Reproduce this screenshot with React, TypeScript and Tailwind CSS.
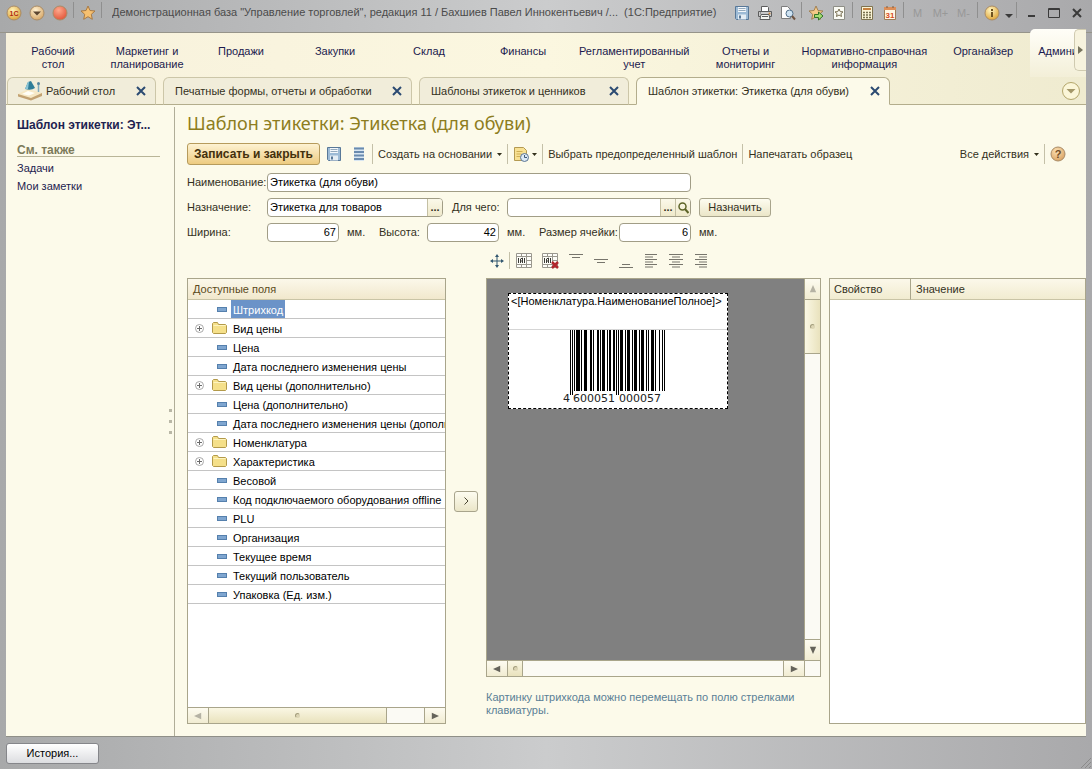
import type { ReactNode } from 'react'

const sections = [
  'Рабочий\nстол',
  'Маркетинг и\nпланирование',
  'Продажи',
  'Закупки',
  'Склад',
  'Финансы',
  'Регламентированный\nучет',
  'Отчеты и\nмониторинг',
  'Нормативно-справочная\nинформация',
  'Органайзер',
]

type Tab = { title: string; width: string; icon?: boolean; active?: boolean }

const tabs: Tab[] = [
  { title: 'Рабочий стол', width: 'w-[149px]', icon: true },
  { title: 'Печатные формы, отчеты и обработки', width: 'w-[249px]' },
  { title: 'Шаблоны этикеток и ценников', width: 'w-[210px]' },
  { title: 'Шаблон этикетки: Этикетка (для обуви)', width: 'w-[254px]', active: true },
]

const fields: { name: string; group?: boolean }[] = [
  { name: 'Штрихкод' },
  { name: 'Вид цены', group: true },
  { name: 'Цена' },
  { name: 'Дата последнего изменения цены' },
  { name: 'Вид цены (дополнительно)', group: true },
  { name: 'Цена (дополнительно)' },
  { name: 'Дата последнего изменения цены (дополнительно)' },
  { name: 'Номенклатура', group: true },
  { name: 'Характеристика', group: true },
  { name: 'Весовой' },
  { name: 'Код подключаемого оборудования offline' },
  { name: 'PLU' },
  { name: 'Организация' },
  { name: 'Текущее время' },
  { name: 'Текущий пользователь' },
  { name: 'Упаковка (Ед. изм.)' },
]

export default function App() {
  return (
    <div className="flex h-screen flex-col overflow-hidden bg-gradient-to-r from-[#a8a9aa] via-[#cbcccd] to-[#a9a9ab] font-['Liberation_Sans',Arial,sans-serif] text-[11px] leading-[13px] text-[#33301c]">
      <TitleBar />
      <div className="mx-[6px] flex min-h-0 flex-1 flex-col border-b border-[#8f8f88] bg-[#fcfaea]">
        <SectionBar />
        <TabBar />
        <div className="flex min-h-0 flex-1 pt-[2px]">
          <Sidebar />
          <TemplateForm />
        </div>
      </div>
      <footer className="flex h-8 shrink-0 items-center justify-between pl-[6px]">
        <button className="h-[21px] w-[93px] rounded-[3px] border border-[#85868a] bg-gradient-to-b from-white to-[#dcdde0] text-black">
          История...
        </button>
        <svg width="12" height="12" viewBox="0 0 12 12" className="self-end" stroke="#8a8a8a">
          <path d="M1 11L11 1M5 11l6-6M9 11l2-2" />
        </svg>
      </footer>
    </div>
  )
}

function TitleBar() {
  return (
    <header className="flex h-[33px] shrink-0 items-start border-b border-[#96948a] pt-[2px] pr-[4px] pl-[2px]">
      <IconButton label="Главное меню">
        <Ball light="#fff3b8" dark="#dda33d">
          <text x="8" y="11" textAnchor="middle" fontSize="7" fontWeight="bold" fill="#b02a10">1С</text>
        </Ball>
      </IconButton>
      <IconButton label="Меню">
        <Ball light="#fff0d0" dark="#d8a96a">
          <path d="M4 6.500h8L8 10.500z" fill="#5c4630" />
        </Ball>
      </IconButton>
      <IconButton label="Стоп">
        <Ball light="#ffa88c" dark="#e2583c" />
      </IconButton>
      <Divider />
      <IconButton label="Избранное">
        <svg width="16" height="16" viewBox="0 0 16 16">
          <path d={STAR} fill="#f6c070" stroke="#a87a45" />
        </svg>
      </IconButton>
      <Divider />
      <h1 className="ml-2 min-w-0 flex-1 truncate pt-1 text-[11px] whitespace-pre text-[#4b4b4b]">
        {'Демонстрационная база "Управление торговлей", редакция 11 / Бахшиев Павел Иннокентьевич /...  (1С:Предприятие)'}
      </h1>
      <IconButton label="Сохранить"><SaveIcon /></IconButton>
      <IconButton label="Печать">
        <svg width="16" height="16" viewBox="0 0 16 16" stroke="#5d5d5d">
          <path d="M4.500 6V1.500h6l1 1V6" fill="#fff" />
          <path d="M1.500 6.500h13v5h-13z" fill="#c9c9c9" />
          <path d="M4 9.500h8l1 5H3z" fill="#f5f5f0" />
          <path d="M5 11.500h6M3 8h1" />
          <circle cx="12.500" cy="8.500" r="1" fill="#d4873a" stroke="none" />
        </svg>
      </IconButton>
      <IconButton label="Просмотр">
        <svg width="16" height="16" viewBox="0 0 16 16" fill="none">
          <path d="M1.500 1.500h6l3 3v9h-9z" fill="#fdfdfd" stroke="#7d7d7d" />
          <circle cx="9.500" cy="8.500" r="3.500" fill="#cfe3f2" stroke="#52708b" />
          <path d="M12 11l3 3.500" stroke="#6e5340" strokeWidth="2" />
        </svg>
      </IconButton>
      <Divider />
      <IconButton label="Добавить в избранное">
        <svg width="16" height="16" viewBox="0 0 16 16">
          <path d={STAR} fill="#f5c987" stroke="#a18154" />
          <path d="M6.500 9.500h4V7l4.500 4-4.500 4v-2.500h-4z" fill="#a5dd72" stroke="#347427" />
        </svg>
      </IconButton>
      <IconButton label="История избранного">
        <svg width="16" height="16" viewBox="0 0 16 16">
          <path d="M2.500 1.500h11v13h-11z" fill="#fbfbf4" stroke="#8e8e86" />
          <path d="M8 4l1.200 2.600 2.800.3-2.100 1.800.6 2.800L8 10l-2.500 1.500.6-2.800L4 6.900l2.800-.3z" fill="none" stroke="#776d50" />
        </svg>
      </IconButton>
      <Divider />
      <IconButton label="Калькулятор">
        <svg width="16" height="16" viewBox="0 0 16 16">
          <path d="M2.500 1.500h11v13h-11z" fill="#fbf5d6" stroke="#7e7350" />
          <path d="M4 3h8v2H4z" fill="#c8823e" />
          <path d="M4 7.500h8M4 10h8M4 12.500h8" stroke="#77704f" strokeDasharray="2 1" strokeWidth="1.500" />
        </svg>
      </IconButton>
      <IconButton label="Календарь">
        <svg width="16" height="16" viewBox="0 0 16 16">
          <path d="M2.500 2.500h11v12h-11z" fill="#fff8e4" stroke="#9c7c58" />
          <path d="M2 2h12v3H2z" fill="#dd8f58" />
          <path d="M5 1v2M11 1v2" stroke="#775b40" />
          <text x="8" y="13" textAnchor="middle" fontSize="8" fontWeight="bold" fill="#d84b22">31</text>
        </svg>
      </IconButton>
      <Divider />
      {['M', 'M+', 'M-'].map((name) => (
        <button key={name} disabled className="h-[22px] w-[23px] shrink-0 text-[#989898]">
          {name}
        </button>
      ))}
      <Divider />
      <IconButton label="О программе">
        <Ball light="#fff4c0" dark="#e0a83c">
          <path d="M7 4h2v2H7zM7 7h2v5H7z" fill="#6f5320" />
        </Ball>
      </IconButton>
      <button aria-label="Ещё" className="flex h-[18px] w-[11px] shrink-0 items-end justify-center pb-[2px]">
        <svg width="8" height="4" viewBox="0 0 8 4" fill="#3a3a3a"><path d="M0 0h8L4 4z" /></svg>
      </button>
      <Divider />
      <div className="flex shrink-0 text-[#3a3a3a]">
        <IconButton label="Свернуть">
          <svg width="12" height="12" viewBox="0 0 12 12" stroke="currentColor" strokeWidth="2"><path d="M3 9h7" /></svg>
        </IconButton>
        <IconButton label="Развернуть">
          <svg width="12" height="12" viewBox="0 0 12 12" fill="none" stroke="currentColor"><path d="M.5 1.500h11v9H.5zM.5 2.500h11" /></svg>
        </IconButton>
        <IconButton label="Закрыть">
          <svg width="10" height="10" viewBox="0 0 10 10" stroke="currentColor" strokeWidth="2"><path d="M1 1l8 8M9 1L1 9" /></svg>
        </IconButton>
      </div>
    </header>
  )
}

function SectionBar() {
  return (
    <nav className="flex h-11 shrink-0 bg-gradient-to-r from-[#f7f1dc] via-[#fbf7e0] to-[#efebd0] text-center text-[#1b1a4e]">
      {sections.map((name) => (
        <a key={name} href="#" className="min-w-[94px] shrink-0 px-[9px] pt-3 whitespace-pre">
          {name}
        </a>
      ))}
      <div className="-mt-1 flex min-w-0 flex-1 rounded-tl-[5px] bg-gradient-to-b from-[#fffef8] to-[#f3efd8]">
        <a href="#" className="min-w-0 flex-1 overflow-hidden pt-4 pl-2 text-left whitespace-nowrap">
          Администрирование
        </a>
        <button
          aria-label="Прокрутить разделы"
          className="flex h-[42px] w-3 shrink-0 items-center justify-center rounded-l-[5px] border border-r-0 border-[#cfcab0] bg-[#f7f3de]"
        >
          <svg width="5" height="8" viewBox="0 0 5 8" fill="#77745e"><path d="M0 0l5 4-5 4z" /></svg>
        </button>
      </div>
    </nav>
  )
}

function TabBar() {
  return (
    <div className="flex h-7 shrink-0 items-end bg-gradient-to-r from-[#f7f1dc] via-[#fbf7e0] to-[#efebd0]">
      <div className="h-full w-px border-b border-[#b3ad8c]" />
      {tabs.map((tab) => (
        <div key={tab.title} className="flex h-full">
          <div
            className={`flex h-full items-center justify-between rounded-t-[6px] border pr-[7px] ${tab.width} ${
              tab.active
                ? 'border-[#b3ad8c] border-b-transparent bg-[#fcfaea]'
                : 'border-[#ccc6a8] border-b-[#b3ad8c] bg-[#f1edda]'
            }`}
          >
            <a href="#" className={`flex items-center gap-1 whitespace-nowrap ${tab.icon ? 'pl-[10px]' : 'pl-[11px]'}`}>
              {tab.icon && <DesktopIcon />}
              {tab.title}
            </a>
            <button aria-label={`Закрыть: ${tab.title}`} className="p-[2px]">
              <svg width="10" height="10" viewBox="0 0 10 10" stroke="#2b4a72" strokeWidth="2">
                <path d="M1 1l8 8M9 1L1 9" />
              </svg>
            </button>
          </div>
          <div className="w-[7px] border-b border-[#b3ad8c]" />
        </div>
      ))}
      <div className="flex h-full flex-1 items-center justify-end border-b border-[#b3ad8c] pr-[6px]">
        <button aria-label="Список вкладок">
          <svg width="18" height="18" viewBox="0 0 18 18" className="block">
            <circle cx="9" cy="9" r="8.500" fill="#fbf6d8" stroke="#b3a66b" />
            <path d="M4.500 7h9L9 11.500z" fill="#a39768" />
          </svg>
        </button>
      </div>
    </div>
  )
}

function Sidebar() {
  return (
    <aside className="flex w-[169px] shrink-0 border-r border-[#b0ad98]">
      <div className="min-w-0 flex-1 pt-[11px] pl-[11px]">
        <p className="w-[140px] truncate text-[12px] leading-[14px] font-bold text-[#1e2350]">
          Шаблон этикетки: Эт...
        </p>
        <h2 className="mt-3 w-[143px] border-b border-[#b9b598] text-[12px] leading-[12px] font-bold text-[#7c7a5a]">
          См. также
        </h2>
        <ul className="mt-[5px] space-y-[5px] text-[#1e2350]">
          <li><a href="#">Задачи</a></li>
          <li><a href="#">Мои заметки</a></li>
        </ul>
      </div>
      <div className="flex w-2 flex-col items-center justify-center gap-2">
        <i className="size-[3px] bg-[#b9b7a6]" />
        <i className="size-[3px] bg-[#b9b7a6]" />
        <i className="size-[3px] bg-[#b9b7a6]" />
      </div>
    </aside>
  )
}

function TemplateForm() {
  return (
    <main className="flex min-w-0 flex-1 flex-col pb-3 pl-3">
      <h2 className="mt-1 font-['Noto_Sans',sans-serif] text-[18px] leading-[25px] text-[#8d7d20]">
        Шаблон этикетки: Этикетка (для обуви)
      </h2>
      <div className="mt-[7px] flex h-[22px] items-center whitespace-nowrap">
        <button className="h-[22px] w-[133px] rounded-[3px] border border-[#b69b5c] bg-gradient-to-b from-[#fdf2d2] to-[#edcb80] text-[12px] font-bold text-[#43300c]">
          Записать и закрыть
        </button>
        <button aria-label="Записать" className="ml-[6px]"><SaveIcon /></button>
        <button aria-label="Список" className="ml-[9px]">
          <svg width="16" height="16" viewBox="0 0 16 16" className="block">
            <path d="M3 1h10v14H3z" fill="#d8e6f2" />
            <path d="M3 2.500h10M3 6h10M3 9.500h10M3 13h10" stroke="#6a8bae" strokeWidth="2" />
          </svg>
        </button>
        <ToolDivider />
        <button className="flex items-center gap-[5px]">Создать на основании <Caret /></button>
        <ToolDivider />
        <button aria-label="Создать документ" className="flex items-center gap-[3px]">
          <svg width="16" height="16" viewBox="0 0 16 16">
            <path d="M1.500 1.500h9l3 3v10h-12z" fill="#f8e193" stroke="#b49a52" />
            <path d="M3.500 5.500h6M3.500 8h5M3.500 10.500h4" stroke="#d0af54" />
            <circle cx="11.500" cy="11.500" r="4" fill="#dbe9f6" stroke="#5b7594" />
            <path d="M11.500 9v2.500H14" fill="none" stroke="#3d5878" />
          </svg>
          <Caret />
        </button>
        <ToolDivider />
        <button>Выбрать предопределенный шаблон</button>
        <ToolDivider />
        <button>Напечатать образец</button>
        <div className="flex-1" />
        <button className="flex items-center gap-[5px]">Все действия <Caret /></button>
        <ToolDivider />
        <button aria-label="Справка" className="mr-5">
          <Ball light="#fbe0b4" dark="#dba566">
            <text x="8" y="12" textAnchor="middle" fontSize="11" fontWeight="bold" fill="#6f4a24">?</text>
          </Ball>
        </button>
      </div>

      <div className="mt-2 flex flex-col gap-[6px]">
        <div className="flex h-[19px] items-center">
          <label htmlFor="name" className="w-20 shrink-0">Наименование:</label>
          <TextBox id="name" value="Этикетка (для обуви)" width="w-[424px]" />
        </div>
        <div className="flex h-[19px] items-center">
          <label htmlFor="purpose" className="w-20 shrink-0">Назначение:</label>
          <TextBox id="purpose" value="Этикетка для товаров" width="w-[176px]">
            <FieldButton label="Выбрать назначение">...</FieldButton>
          </TextBox>
          <label htmlFor="target" className="ml-[9px] w-[55px] shrink-0">Для чего:</label>
          <TextBox id="target" value="" width="w-[184px]">
            <FieldButton label="Выбрать">...</FieldButton>
            <FieldButton label="Найти">
              <svg width="11" height="12" viewBox="0 0 11 12" fill="none" stroke="#5d6428">
                <circle cx="4.500" cy="4.500" r="3.500" strokeWidth="1.500" />
                <path d="M7 7l3.500 4" strokeWidth="2" />
              </svg>
            </FieldButton>
          </TextBox>
          <button className="ml-2 h-[19px] w-[72px] rounded-[3px] border border-[#a8a48c] bg-gradient-to-b from-[#fdfcf0] to-[#ebe6c8]">
            Назначить
          </button>
        </div>
        <div className="flex h-[19px] items-center">
          <label htmlFor="width" className="w-20 shrink-0">Ширина:</label>
          <TextBox id="width" value="67" width="w-[72px]" numeric />
          <span className="w-[40px] pl-2">мм.</span>
          <label htmlFor="height" className="w-12 shrink-0">Высота:</label>
          <TextBox id="height" value="42" width="w-[72px]" numeric />
          <span className="w-[40px] pl-2">мм.</span>
          <label htmlFor="cell" className="w-20 shrink-0">Размер ячейки:</label>
          <TextBox id="cell" value="6" width="w-[72px]" numeric />
          <span className="pl-2">мм.</span>
        </div>
      </div>

      <AlignBar />

      <div className="mt-[9px] flex min-h-0 flex-1">
        <FieldTree />
        <div className="flex w-10 shrink-0 items-center justify-center">
          <button
            aria-label="Добавить поле"
            className="flex h-[21px] w-6 items-center justify-center rounded-[3px] border border-[#a8a48c] bg-gradient-to-b from-[#fdfcf0] to-[#ebe6c8]"
          >
            <svg width="5" height="8" viewBox="0 0 5 8" fill="none" stroke="#4a4630"><path d="M.5.5L4 4 .5 7.500" /></svg>
          </button>
        </div>
        <div className="flex w-[335px] shrink-0 flex-col">
          <LabelCanvas />
          <p className="mt-[14px] h-[33px] text-[#5a7f96]">
            Картинку штрихкода можно перемещать по полю стрелками клавиатуры.
          </p>
        </div>
        <div className="ml-2 min-w-0 flex-1 border border-[#a9a58b] bg-white">
          <table className="w-full table-fixed border-separate border-spacing-0 text-left">
            <thead>
              <tr className="bg-gradient-to-b from-[#fbf8ea] to-[#f1ebcf]">
                <th className="h-[21px] w-[81px] border-r border-b border-r-[#a9a58b] border-b-[#c9c4a6] pl-1 font-normal">Свойство</th>
                <th className="h-[21px] border-b border-[#c9c4a6] pl-[5px] font-normal">Значение</th>
              </tr>
            </thead>
          </table>
        </div>
      </div>
    </main>
  )
}

function AlignBar() {
  const lines = [
    { label: 'По верхнему краю', d: 'M1 1.500h14M4 4.500h8' },
    { label: 'По середине', d: 'M1 6.500h14M4 9.500h8' },
    { label: 'По нижнему краю', d: 'M4 11.500h8M1 14.500h14' },
    { label: 'По левому краю', d: 'M2 1.500h12M2 4h8M2 6.500h12M2 9h8M2 11.500h12M2 14h8' },
    { label: 'По центру', d: 'M1 1.500h14M4 4h8M1 6.500h14M4 9h8M1 11.500h14M4 14h8' },
    { label: 'По правому краю', d: 'M2 1.500h12M6 4h8M2 6.500h12M6 9h8M2 11.500h12M6 14h8' },
  ]

  return (
    <div className="mt-[10px] ml-[303px] flex h-[17px] items-center">
      <button aria-label="Переместить">
        <svg width="14" height="14" viewBox="0 0 14 14" className="block" fill="#31566f" stroke="#31566f">
          <path d="M7 2v10M2 7h10" />
          <path d="M7 0l2 3H5zM7 14l2-3H5zM0 7l3-2v4zM14 7l-3-2v4z" stroke="none" />
        </svg>
      </button>
      <div className="mr-[6px] ml-[5px] h-[17px] w-px bg-[#c4c0a8]" />
      <div className="flex gap-[9px]">
        <button aria-label="Объединить ячейки"><MergeIcon /></button>
        <button aria-label="Разъединить ячейки"><MergeIcon crossed /></button>
        {lines.map((line) => (
          <button key={line.label} aria-label={line.label}>
            <svg width="16" height="16" viewBox="0 0 16 16" className="block" stroke="#77756c"><path d={line.d} /></svg>
          </button>
        ))}
      </div>
    </div>
  )
}

function FieldTree() {
  return (
    <section className="flex w-[259px] shrink-0 flex-col border border-[#a9a58b] bg-white">
      <h3 className="flex h-[21px] shrink-0 items-center border-b border-[#c9c4a6] bg-gradient-to-b from-[#fbf8ea] to-[#f1e8cd] pl-[5px] text-[#5a4a20]">
        Доступные поля
      </h3>
      <ul className="min-h-0 flex-1 overflow-hidden text-black">
        {fields.map((field, index) => (
          <li key={field.name} className="flex h-[19px] items-center border-b border-[#c4c4c4] whitespace-nowrap">
            <span className="flex w-[23px] shrink-0 justify-center">
              {field.group && (
                <svg width="9" height="9" viewBox="0 0 9 9" fill="none">
                  <circle cx="4.500" cy="4.500" r="4" stroke="#a9a9a9" />
                  <path d="M2 4.500h5M4.500 2v5" stroke="#6c6c6c" />
                </svg>
              )}
            </span>
            <span className={`flex w-5 shrink-0 ${field.group ? 'justify-start pl-px' : 'justify-end pr-1'}`}>
              {field.group ? <FolderIcon /> : <i className="h-[5px] w-[10px] border border-[#5580ad] bg-[#7fa6d0]" />}
            </span>
            <span className={`flex h-[18px] items-center px-[2px] pt-[2px] ${index === 0 ? 'bg-[#6b93c8] text-white' : ''}`}>
              {field.name}
            </span>
          </li>
        ))}
      </ul>
      <div className="flex h-4 shrink-0 border-t border-[#a9a58b] bg-[#fbfaf4]">
        <ScrollButton direction="left" disabled />
        <div className="flex w-[179px] items-center justify-center border-x border-[#a9a58b] bg-gradient-to-b from-[#faf7e4] to-[#e9e2bd]">
          <Grip />
        </div>
        <div className="flex-1" />
        <div className="flex border-l border-[#a9a58b]"><ScrollButton direction="right" /></div>
      </div>
    </section>
  )
}

function LabelCanvas() {
  return (
    <section className="flex min-h-0 flex-1 flex-col border border-[#a9a58b] bg-[#fbfaf4]">
      <div className="flex min-h-0 flex-1">
        <div className="flex-1 bg-[#808080] pt-[14px] pl-[21px]">
          <div className="h-[116px] w-[220px] border border-dashed border-black bg-white text-black">
            <div className="h-9 overflow-hidden border-b border-[#d5d5d5] pt-px pl-[2px] whitespace-nowrap">
              {'<[Номенклатура.НаименованиеПолное]>'}
            </div>
            <Barcode code="4600051000057" />
          </div>
        </div>
        <div className="flex w-4 shrink-0 flex-col border-l border-[#a9a58b]">
          <ScrollButton direction="up" disabled />
          <div className="flex h-[55px] items-center justify-center border-y border-[#a9a58b] bg-gradient-to-r from-[#faf7e4] to-[#e9e2bd]">
            <Grip />
          </div>
          <div className="flex-1" />
          <div className="border-t border-[#a9a58b]"><ScrollButton direction="down" /></div>
        </div>
      </div>
      <div className="flex h-4 shrink-0 border-t border-[#a9a58b]">
        <ScrollButton direction="left" />
        <div className="flex w-4 items-center justify-center border-x border-[#a9a58b] bg-gradient-to-b from-[#faf7e4] to-[#e9e2bd]">
          <Grip />
        </div>
        <div className="flex-1" />
        <div className="flex border-x border-[#a9a58b]"><ScrollButton direction="right" /></div>
        <div className="w-[15px]" />
      </div>
    </section>
  )
}

const LEFT_ODD = ['0001101', '0011001', '0010011', '0111101', '0100011', '0110001', '0101111', '0111011', '0110111', '0001011']
const PARITY = ['LLLLLL', 'LLGLGG', 'LLGGLG', 'LLGGGL', 'LGLLGG', 'LGGLLG', 'LGGGLL', 'LGLGLG', 'LGLGGL', 'LGGLGL']

function invert(bits: string) {
  return bits.split('').map((bit) => (bit === '1' ? '0' : '1')).join('')
}

function encodeEan(code: string) {
  const digits = code.split('').map(Number)
  const parity = PARITY[digits[0]]
  const left = digits.slice(1, 7).map((digit, i) =>
    parity[i] === 'L' ? LEFT_ODD[digit] : invert(LEFT_ODD[digit]).split('').reverse().join(''),
  )
  const right = digits.slice(7).map((digit) => invert(LEFT_ODD[digit]))
  return `101${left.join('')}01010${right.join('')}101`
}

function Barcode({ code }: { code: string }) {
  const bits = encodeEan(code).split('')
  return (
    <svg width="106" height="77" viewBox="0 0 106 77" className="ml-[53px] block" shapeRendering="crispEdges">
      {bits.map((bit, i) => {
        if (bit === '0') return null
        const guard = i < 3 || (i > 44 && i < 50)
        return <rect key={i} x={8 + i} y="0" width="1" height={guard ? 65 : 61} />
      })}
      <g fontFamily="DejaVu Sans, sans-serif" fontSize="11" fill="#222">
        <text x="1" y="72">{code[0]}</text>
        <text x="11" y="72">{code.slice(1, 7)}</text>
        <text x="57" y="72">{code.slice(7)}</text>
      </g>
    </svg>
  )
}

function TextBox({ id, value, width, numeric, children }: {
  id: string
  value: string
  width: string
  numeric?: boolean
  children?: ReactNode
}) {
  return (
    <div className={`flex h-[19px] shrink-0 overflow-hidden rounded-[4px] border border-[#a19d86] bg-white ${width}`}>
      <input
        id={id}
        defaultValue={value}
        className={`min-w-0 flex-1 bg-transparent px-[2px] text-black outline-none ${numeric ? 'text-right' : ''}`}
      />
      {children}
    </div>
  )
}

function FieldButton({ label, children }: { label: string; children: ReactNode }) {
  return (
    <button
      aria-label={label}
      className="flex w-[15px] shrink-0 items-center justify-center border-l border-[#c4c0a4] bg-gradient-to-b from-[#fbf9ea] to-[#efe9ca] font-bold"
    >
      {children}
    </button>
  )
}

function IconButton({ label, children }: { label: string; children: ReactNode }) {
  return (
    <button aria-label={label} className="flex h-[22px] w-[23px] shrink-0 items-center justify-center">
      {children}
    </button>
  )
}

function Divider() {
  return <div className="mx-[2px] h-4 w-px shrink-0 bg-[#8f8f8f]" />
}

function ToolDivider() {
  return <div className="mx-[5px] h-5 w-px shrink-0 bg-[#c4c0a8]" />
}

function Caret() {
  return (
    <svg width="5" height="3" viewBox="0 0 5 3" fill="#33301c"><path d="M0 0h5L2.500 3z" /></svg>
  )
}

function Grip() {
  return <i className="size-[5px] rounded-full border border-r-transparent border-b-transparent border-[#a39d7c] bg-[#dcd5b4]" />
}

const ARROWS = {
  left: 'M9 1v8L0 5z',
  right: 'M1 1v8l9-4z',
  up: 'M1 9h8L5 0z',
  down: 'M1 1h8L5 10z',
}

function ScrollButton({ direction, disabled }: { direction: keyof typeof ARROWS; disabled?: boolean }) {
  const size = direction === 'up' || direction === 'down' ? 'h-5 w-[15px]' : 'h-[15px] w-5'
  return (
    <button
      aria-label={`Прокрутка ${direction}`}
      disabled={disabled}
      className={`flex shrink-0 items-center justify-center bg-gradient-to-b from-[#fdfbf0] to-[#f1ecd2] ${size}`}
    >
      <svg width="8" height="8" viewBox="0 0 10 10" fill={disabled ? '#b5b2a4' : '#65635a'}><path d={ARROWS[direction]} /></svg>
    </button>
  )
}

const STAR = 'M8 1l2 4.500 5 .5-3.700 3.300 1 5L8 11.700l-4.300 2.600 1-5L1 6l5-.5z'

function Ball({ light, dark, children }: { light: string; dark: string; children?: ReactNode }) {
  const id = `ball${dark.slice(1)}`
  return (
    <svg width="16" height="16" viewBox="0 0 16 16" className="block">
      <radialGradient id={id} cx="0.4" cy="0.3" r="0.7">
        <stop offset="0" stopColor={light} />
        <stop offset="1" stopColor={dark} />
      </radialGradient>
      <circle cx="8" cy="8" r="7" fill={`url(#${id})`} stroke="#a98c68" />
      {children}
    </svg>
  )
}

function SaveIcon() {
  return (
    <svg width="16" height="16" viewBox="0 0 16 16" className="block">
      <path d="M1.500 1.500h13v13h-12l-1-1z" fill="#9dbbd6" stroke="#587898" />
      <path d="M4 2h8v5H4z" fill="#f4f8fb" />
      <path d="M4.500 3.500h7M4.500 5.500h7" stroke="#93a9bd" />
      <path d="M4 9.500h8v5H4z" fill="#e4edf4" />
      <path d="M5 10.500h2v3H5z" fill="#587898" />
    </svg>
  )
}

function FolderIcon() {
  return (
    <svg width="15" height="12" viewBox="0 0 15 12">
      <path d="M.5 1.500l1-1h4l1 2h7l1 1v7l-1 1h-12l-1-1z" fill="#f5e08a" stroke="#b39a4a" />
      <path d="M1.500 3.500h12" stroke="#fdf4c0" />
    </svg>
  )
}

function DesktopIcon() {
  return (
    <svg width="24" height="20" viewBox="0 0 24 20">
      <path d="M0 13v2.500l13 4 11-4.500v-3z" fill="#c2a272" />
      <path d="M0 13l10-5 14 4-11 5z" fill="#f6e8c4" />
      <path d="M4 13l6-3 7 2-6 2.500z" fill="#fffef6" />
      <path d="M10 1l3-1 4 7q-4 3-10 1z" fill="#2f7d98" />
      <path d="M10 1l1 0-1 7-3 0z" fill="#8cc6d6" />
      <path d="M20.500 3v8" fill="none" stroke="#7fa9bb" strokeWidth="1.500" />
      <circle cx="20.500" cy="2.500" r="1.500" fill="#56869e" />
    </svg>
  )
}

function MergeIcon({ crossed }: { crossed?: boolean }) {
  return (
    <svg width="17" height="16" viewBox="0 0 17 16" className="block" fill="none">
      <path d="M.5.5h15v14H.5zM.5 3.500h15M.5 11.500h15M5.500.5v3M10.500.5v14M5.500 11.500v3M10.500 7.500h5" fill="#fdfdf8" stroke="#9a988f" />
      <path d="M2.500 5v5M4.500 10V6l2-1v5M4.500 8h2M8.500 5v5" stroke="#3b3b36" />
      {crossed && <path d="M10 9l6 6M16 9l-6 6" stroke="#b1262c" strokeWidth="2.500" />}
    </svg>
  )
}
